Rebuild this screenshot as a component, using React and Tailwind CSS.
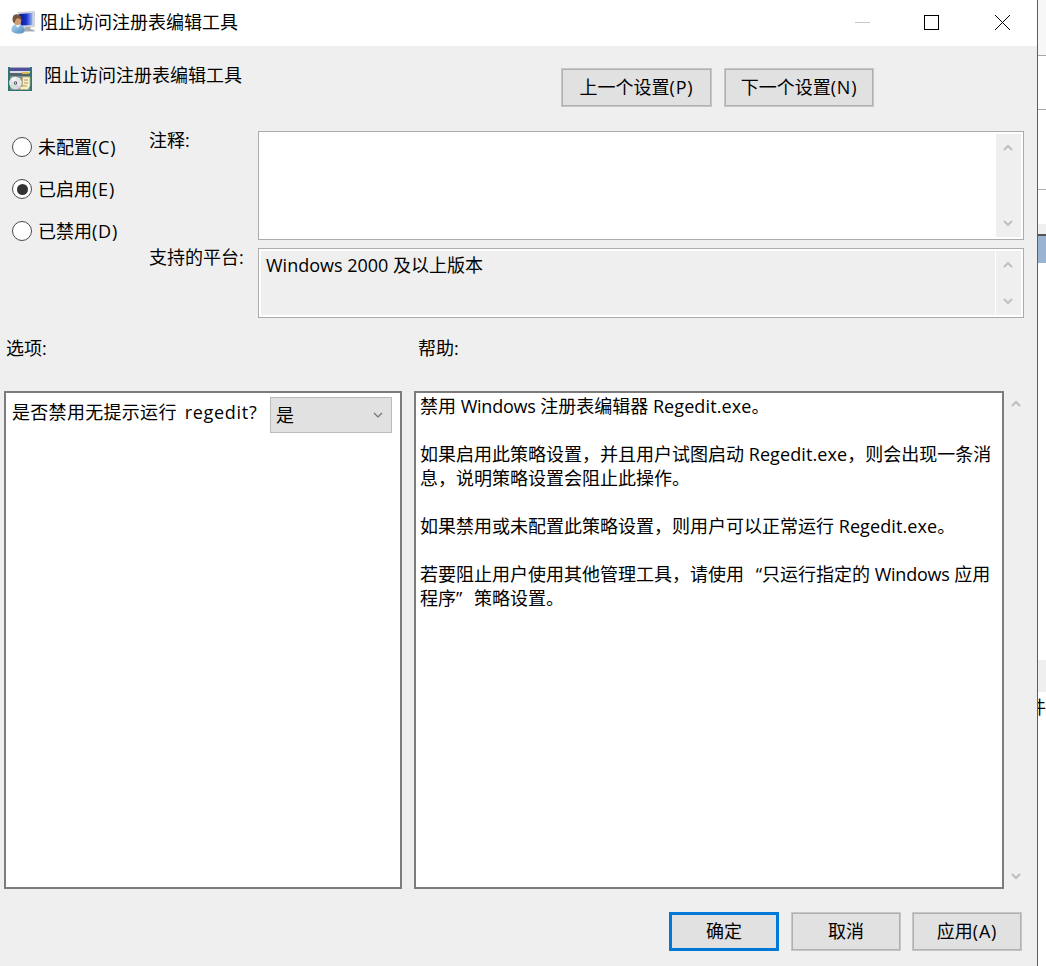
import React from "react";

function Chevron({ up = false, className = "" }) {
  return (
    <svg width="10" height="8" viewBox="0 0 10 8" className={className} fill="none">
      <path d={up ? "M1 6L5 2L9 6" : "M1 2L5 6L9 2"} stroke="currentColor" strokeWidth="2" />
    </svg>
  );
}

function Scroll({ className = "" }) {
  return (
    <div className={`flex flex-col items-center justify-between text-[#bfbfbf] ${className}`}>
      <Chevron up />
      <Chevron />
    </div>
  );
}

const plainBorder = "border border-[#c6c6c6] inset-ring inset-ring-[#b0b0b0]";

function Button({ children, className = "" }) {
  return (
    <button
      className={`flex h-[39px] items-center justify-center whitespace-nowrap bg-[#e1e1e1] pb-[2px] text-[18px] leading-6 ${className}`}
    >
      <span>{children}</span>
    </button>
  );
}

const Key = ({ children }) => <span className="tracking-[0.8px]">({children})</span>;
const En = ({ children }) => <span className="tracking-[-0.25px]">{children}</span>;
const Exe = () => <span className="tracking-[0.1px]">Regedit.exe</span>;

function Radio({ label, hotkey, checked }) {
  return (
    <label className="flex h-[42px] items-center gap-[6px] whitespace-nowrap">
      <span className="flex size-5 items-center justify-center rounded-full border-[1.5px] border-[#4a4a4a] bg-white">
        {checked && <span className="size-[11px] rounded-full bg-[#333]" />}
      </span>
      <span>
        {label}
        <Key>{hotkey}</Key>
      </span>
    </label>
  );
}

function UserIcon() {
  return (
    <svg width="24" height="24" viewBox="0 0 24 24">
      <defs>
        <linearGradient id="screen" x1="0" y1="0" x2="1" y2="0">
          <stop offset="0" stopColor="#07148a" />
          <stop offset=".55" stopColor="#1a35cc" />
          <stop offset="1" stopColor="#9db4f0" />
        </linearGradient>
        <linearGradient id="shirt" x1="0" y1="0" x2="1" y2="1">
          <stop offset="0" stopColor="#b4d8ee" />
          <stop offset="1" stopColor="#4b8cc0" />
        </linearGradient>
      </defs>
      <path d="M7 1.500L23.500 .5V15.500L10 16.500Z" fill="#d5d9de" stroke="#b8bec6" strokeWidth=".6" />
      <path d="M8 3L21.500 2V14L10 14.500Z" fill="url(#screen)" />
      <path d="M15 16H19.500V18L23.500 19V20.500H12V18Z" fill="#a9adb2" />
      <path d="M.5 20C0 16 2 13 6 13C10.500 13 13.500 15 13.500 20.500C12 23.500 3 23.500 .5 20Z" fill="url(#shirt)" />
      <ellipse cx="6.300" cy="9.500" rx="4" ry="4.700" fill="#cf9c72" />
      <path d="M2 11C0 4 5 1.500 9 4.500C10.500 6 10.500 8 10 9C8.500 8 7.500 7 6 7.500C4.500 8 4.500 10 3.500 12Z" fill="#76553b" />
      <path d="M4.500 14L7 17L9 14Z" fill="#eef6fb" />
    </svg>
  );
}

function PolicyIcon() {
  return (
    <svg width="24" height="24" viewBox="0 0 24 24">
      <rect width="24" height="24" fill="#2f7672" />
      <rect x="2" y="0" width="20" height="1" fill="#a5adbd" />
      <rect x="2" y="1" width="20" height="3" fill="#50509a" />
      <rect x="2" y="4" width="20" height="2" fill="#d9dbe6" />
      <rect x="2" y="6" width="20" height="3" fill="#55646c" />
      <rect x="14" y="5" width="7" height="2" fill="#d8b955" />
      <rect x="2" y="9" width="20" height="14" fill="#7d9092" />
      <circle cx="7.500" cy="16" r="6.300" fill="#e6e6ea" />
      <path d="M7.500 16L3 11.500A6.300 6.300 0 0 1 7.500 9.700Z" fill="#f5f6f4" />
      <path d="M7.500 16L1.500 18A6.300 6.300 0 0 0 6 22Z" fill="#c5e6cc" />
      <path d="M7.500 16L12 20.500A6.300 6.300 0 0 1 7 22.300Z" fill="#e4d1e9" />
      <circle cx="7.500" cy="16" r="1.700" fill="#555" />
      <circle cx="7.500" cy="16" r=".7" fill="#fff" />
      <path d="M14.500 10H22V19L20 22.500H12V19.500H14.500Z" fill="#f8f1cf" stroke="#b8a868" strokeWidth=".7" />
      <path d="M16 13H20M16 16H20M15 19H19" stroke="#b0924a" strokeWidth="1" />
    </svg>
  );
}

export default function App() {
  return (
    <div className="flex h-[966px] w-[1046px] overflow-hidden bg-white font-['Open_Sans','Noto_Sans_CJK_SC',sans-serif] text-[18px] leading-6 text-black">
      <main className="flex w-[1038px] shrink-0 flex-col border-r border-[#5e5e5e] bg-[#efefef]">
        <header className="flex h-[46px] shrink-0 items-center bg-white pl-[11px]">
          <UserIcon />
          <h1 className="ml-[5px] whitespace-nowrap pb-[2px]">阻止访问注册表编辑工具</h1>
          <div className="ml-auto flex items-center pb-px pr-[27px]">
            <svg width="155" height="15" viewBox="0 0 155 15" fill="none" shapeRendering="crispEdges">
              <path d="M0 7.500H15" stroke="#c8c8c8" />
              <rect x="69.500" y=".5" width="14" height="14" stroke="#000" />
              <path d="M140 0L155 15M155 0L140 15" stroke="#000" shapeRendering="auto" />
            </svg>
          </div>
        </header>

        <section className="flex h-[85px] shrink-0 items-start pl-2">
          <div className="pt-[21px]">
            <PolicyIcon />
          </div>
          <h2 className="ml-3 w-[517px] whitespace-nowrap pt-[17px]">阻止访问注册表编辑工具</h2>
          <div className="flex gap-3 pt-[22px]">
            <Button className={`w-[151px] ${plainBorder}`}>上一个设置<Key>P</Key></Button>
            <Button className={`w-[150px] ${plainBorder}`}>下一个设置<Key>N</Key></Button>
          </div>
        </section>

        <section className="flex h-[187px] shrink-0">
          <div className="w-[149px] pl-3">
            <div className="-mt-[5px]">
              <Radio label="未配置" hotkey="C" />
              <Radio label="已启用" hotkey="E" checked />
              <Radio label="已禁用" hotkey="D" />
            </div>
          </div>
          <div className="grid grid-cols-[109px_766px] grid-rows-[109px_70px] gap-y-2">
            <div className="-mt-[3px]">注释:</div>
            <div className="flex border border-[#ababab] bg-white p-[2px]">
              <div className="grow" />
              <Scroll className="w-[25px] bg-[#efefef] pb-[10px] pr-[2px] pt-[10px]" />
            </div>
            <div className="-mt-[3px] whitespace-nowrap">支持的平台:</div>
            <div className="flex border border-[#ababab] bg-white p-[2px]">
              <div className="grow bg-[#efefef] pl-[5px] pt-[2px]">
                Windows 2000 及以上版本
              </div>
              <Scroll className="ml-px w-[25px] bg-[#efefef] pb-[10px] pr-[2px] pt-[10px]" />
            </div>
          </div>
        </section>

        <section className="flex h-[73px] shrink-0 pl-[6px] pt-[18px]">
          <h3 className="w-[412px]">选项:</h3>
          <h3>帮助:</h3>
        </section>

        <section className="flex h-[498px] shrink-0 pl-1">
          <div className="flex w-[398px] items-start border-2 border-[#7c7c7c] bg-white pl-[6px] pt-1">
            <span className="w-[258px] whitespace-nowrap pt-[3px]">
              <span className="tracking-[0.3px]">是否禁用无提示运行</span>
              <span className="ml-2 tracking-[0.7px]">regedit?</span>
            </span>
            <div className="flex h-[36px] w-[122px] items-center justify-between border border-[#bcbcbc] bg-[#e1e1e1] pl-[5px] pr-2">
              <span>是</span>
              <svg width="10" height="8" viewBox="0 0 10 8" fill="none">
                <path d="M1 2L5 6L9 2" stroke="#707070" strokeWidth="1.200" />
              </svg>
            </div>
          </div>
          <div className="ml-3 w-[590px] whitespace-nowrap border-2 border-[#7c7c7c] bg-white pl-1 pt-[1px]">
            <p>禁用 <En>Windows</En> 注册表编辑器 <Exe />。</p>
            <p className="mt-6">如果启用此策略设置，并且用户试图启动 <Exe />，则会出现一条消</p>
            <p>息，说明策略设置会阻止此操作。</p>
            <p className="mt-6">如果禁用或未配置此策略设置，则用户可以正常运行 <Exe />。</p>
            <p className="mt-6">
              若要阻止用户使用其他管理工具，请使用
              <span className="inline-block w-[18px] text-right">“</span>只运行指定的 <En>Windows</En> 应用
            </p>
            <p>
              程序<span className="inline-block w-[18px]">”</span>策略设置。
            </p>
          </div>
          <Scroll className="w-[24px] py-[9px]" />
        </section>

        <footer className="flex pl-[669px] pt-[23px]">
          <Button className="w-[110px] border-[3px] border-[#0078d7]">确定</Button>
          <Button className={`ml-3 w-[110px] ${plainBorder}`}>取消</Button>
          <Button className={`ml-[11px] w-[110px] ${plainBorder}`}>应用<Key>A</Key></Button>
        </footer>
      </main>

      <aside className="flex w-2 shrink-0 flex-col overflow-hidden bg-white">
        <div className="h-[56px] shrink-0 border-b border-[#a8a8a8] bg-[#f7f7f7]" />
        <div className="h-[54px] shrink-0 border-b border-[#a8a8a8]" />
        <div className="h-[80px] shrink-0 border-b border-[#b0b0b8]" />
        <div className="mt-[34px] h-[10px] shrink-0 bg-[#efefef]" />
        <div className="h-[29px] shrink-0 border-t-2 border-[#555] bg-[#9ab3d3]" />
        <div className="mt-[397px] h-[32px] shrink-0 bg-[#efefef]" />
        <div className="mt-[3px] flex justify-end whitespace-nowrap">件</div>
      </aside>
    </div>
  );
}
